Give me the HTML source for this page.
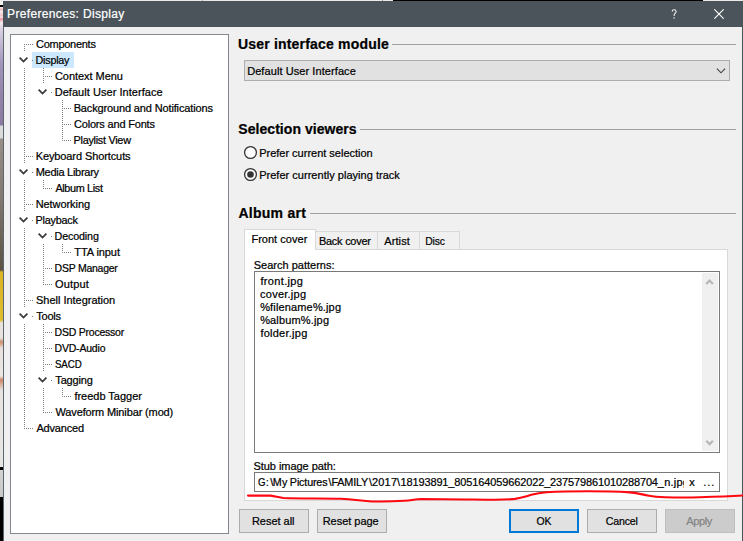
<!DOCTYPE html>
<html><head><meta charset="utf-8"><title>Preferences: Display</title>
<style>
html,body{margin:0;padding:0;}
body{width:743px;height:541px;overflow:hidden;background:#f0f0f0;position:relative;font-family:"Liberation Sans",sans-serif;}
div,span,svg{position:absolute;box-sizing:border-box;}
.t{white-space:pre;-webkit-text-stroke:0.22px currentColor;}
.btn{background:#e1e1e1;border:1px solid #adadad;}
.hr{height:1px;background:#a0a0a0;}
.dv{width:1px;background-image:linear-gradient(#808080 50%,transparent 50%);background-size:1px 2px;}
.dh{height:1px;background-image:linear-gradient(90deg,#808080 50%,transparent 50%);background-size:2px 1px;}
</style></head><body>
<div style="left:0;top:0;width:3px;height:541px;background:linear-gradient(#f0f0f0 0px,#f0f0f0 5px,#000 5px,#000 7px,#f6eef0 7px,#eeb4b8 10px,#f6eef0 11px,#f0c0c4 16px,#f6eef0 17px,#e89098 19px,#f0c8cc 21px,#f4ecee 23px,#e4dce6 26px,#d8cfe0 30px,#a294ba 64px,#9282aa 100px,#8a7aa2 125px,#dcdcdc 126px,#d8d8d8 138px,#989088 139px,#807870 200px,#5a5044 270px,#dcb424 272px,#e0bc30 320px,#e8e4e0 323px,#e8e0dc 338px,#cc8c6c 342px,#e8e0dc 348px,#ece8e4 376px,#cc8464 380px,#e8e2de 390px,#e6e6e4 455px,#e4e4e4 467px,#000 467px,#000 470px,#d2d2d2 470px,#c8c8c8 497px,#000 497px,#000 541px);"></div>
<div style="left:0px;top:0;width:743px;height:1px;background:#e9e9e9;"></div>
<div style="left:393px;top:0;width:310px;height:1px;background:#000;"></div>
<div style="left:382px;top:0;width:1px;height:1px;background:#9a9a9a;"></div>
<div style="left:202px;top:0;width:1px;height:1px;background:#b0b0b0;"></div>
<div style="left:3px;top:1px;width:740px;height:26px;background:#4a545a;"></div>
<div style="left:3px;top:27px;width:1px;height:514px;background:#5c666e;"></div>
<div style="left:742px;top:27px;width:1px;height:514px;background:#4a545a;"></div>
<div style="left:10px;top:34px;width:219px;height:500px;background:#fff;border:1px solid #828790;"></div>
<div style="left:32px;top:52px;width:42px;height:16px;background:#cce8ff;"></div>
<div class="hr" style="left:392px;top:44px;width:344px;"></div>
<div class="hr" style="left:360px;top:129px;width:376px;"></div>
<div class="hr" style="left:310px;top:213px;width:426px;"></div>
<div class="btn" style="left:244px;top:60px;width:486px;height:21px;"></div>
<div style="left:244px;top:249px;width:484px;height:252px;background:#fff;border:1px solid #d9d9d9;"></div>
<div style="left:315px;top:231px;width:63px;height:19px;background:#f0f0f0;border:1px solid #d9d9d9;"></div>
<div style="left:377px;top:231px;width:43px;height:19px;background:#f0f0f0;border:1px solid #d9d9d9;"></div>
<div style="left:419px;top:231px;width:41px;height:19px;background:#f0f0f0;border:1px solid #d9d9d9;"></div>
<div style="left:244px;top:229px;width:72px;height:21px;background:#fff;border:1px solid #d9d9d9;border-bottom:none;"></div>
<div style="left:254px;top:271px;width:466px;height:182px;background:#fff;border:1px solid #7a7a7a;"></div>
<div style="left:702px;top:273px;width:16px;height:178px;background:#f0f0f0;"></div>
<div style="left:254px;top:472px;width:466px;height:20px;background:#fff;border:1px solid #7a7a7a;"></div>
<div class="btn" style="left:239px;top:509px;width:70px;height:24px;"></div>
<div class="btn" style="left:317px;top:509px;width:70px;height:24px;"></div>
<div class="btn" style="left:509px;top:509px;width:70px;height:24px;border:2px solid #0078d7;"></div>
<div class="btn" style="left:587px;top:509px;width:70px;height:24px;"></div>
<div class="btn" style="left:665px;top:509px;width:70px;height:24px;background:#cccccc;border-color:#bfbfbf;"></div>
<svg style="left:714px;top:9px" width="10" height="10" viewBox="0 0 10 10"><path d="M0.3 0.3L9.7 9.7M9.7 0.3L0.3 9.7" stroke="#fff" stroke-width="1.1" fill="none"/></svg>
<svg style="left:671px;top:9px" width="7" height="11" viewBox="0 0 7 11"><path d="M1.1 2.6C1.2 1.3 2 0.7 3.1 0.7C4.3 0.7 5.1 1.4 5.1 2.5C5.1 3.7 4.2 4.2 3.6 4.9C3.2 5.4 3.1 5.9 3.1 6.9" stroke="#f4f4f4" stroke-width="1.05" fill="none"/><rect x="2.5" y="8.3" width="1.2" height="1.3" fill="#f4f4f4"/></svg>
<span class="t" style="left:35.00px;top:36.19px;font-size:11px;line-height:16px;font-weight:400;color:#000;letter-spacing:-0.266px;transform:translateX(0.98px) scaleX(0.9987);transform-origin:0 0;">Components</span>
<div class="dh" style="left:24px;top:44px;width:9px;"></div>
<span class="t" style="left:35.00px;top:52.19px;font-size:11px;line-height:16px;font-weight:400;color:#000;letter-spacing:-0.225px;transform:translateX(0.56px) scaleX(0.9771);transform-origin:0 0;">Display</span>
<svg style="left:18px;top:56px" width="11" height="8" viewBox="0 0 11 8"><path d="M1.6 1.7L5.5 5.6L9.4 1.7" stroke="#3c3c3c" stroke-width="1.8" fill="none"/></svg>
<div style="left:32px;top:60px;width:1px;height:1px;background:#808080;"></div>
<span class="t" style="left:54.97px;top:68.19px;font-size:11px;line-height:16px;font-weight:400;color:#000;letter-spacing:-0.043px;">Context Menu</span>
<div class="dh" style="left:43px;top:76px;width:9px;"></div>
<span class="t" style="left:54.65px;top:84.19px;font-size:11px;line-height:16px;font-weight:400;color:#000;letter-spacing:0.047px;">Default User Interface</span>
<svg style="left:37px;top:88px" width="11" height="8" viewBox="0 0 11 8"><path d="M1.6 1.7L5.5 5.6L9.4 1.7" stroke="#3c3c3c" stroke-width="1.8" fill="none"/></svg>
<div style="left:51px;top:92px;width:1px;height:1px;background:#808080;"></div>
<span class="t" style="left:73.65px;top:100.19px;font-size:11px;line-height:16px;font-weight:400;color:#000;letter-spacing:-0.141px;">Background and Notifications</span>
<div class="dh" style="left:62px;top:108px;width:9px;"></div>
<span class="t" style="left:73.97px;top:116.19px;font-size:11px;line-height:16px;font-weight:400;color:#000;letter-spacing:-0.184px;">Colors and Fonts</span>
<div class="dh" style="left:62px;top:124px;width:9px;"></div>
<span class="t" style="left:73.00px;top:132.19px;font-size:11px;line-height:16px;font-weight:400;color:#000;letter-spacing:-0.274px;transform:translateX(0.56px) scaleX(0.9853);transform-origin:0 0;">Playlist View</span>
<div class="dh" style="left:62px;top:140px;width:9px;"></div>
<span class="t" style="left:35.65px;top:148.19px;font-size:11px;line-height:16px;font-weight:400;color:#000;letter-spacing:-0.097px;">Keyboard Shortcuts</span>
<div class="dh" style="left:24px;top:156px;width:9px;"></div>
<span class="t" style="left:35.65px;top:164.19px;font-size:11px;line-height:16px;font-weight:400;color:#000;letter-spacing:-0.270px;">Media Library</span>
<svg style="left:18px;top:168px" width="11" height="8" viewBox="0 0 11 8"><path d="M1.6 1.7L5.5 5.6L9.4 1.7" stroke="#3c3c3c" stroke-width="1.8" fill="none"/></svg>
<div style="left:32px;top:172px;width:1px;height:1px;background:#808080;"></div>
<span class="t" style="left:55.00px;top:180.19px;font-size:11px;line-height:16px;font-weight:400;color:#000;letter-spacing:-0.346px;transform:translateX(0.38px) scaleX(0.9864);transform-origin:0 0;">Album List</span>
<div class="dh" style="left:43px;top:188px;width:9px;"></div>
<span class="t" style="left:35.65px;top:196.19px;font-size:11px;line-height:16px;font-weight:400;color:#000;letter-spacing:-0.063px;">Networking</span>
<div class="dh" style="left:24px;top:204px;width:9px;"></div>
<span class="t" style="left:35.00px;top:212.19px;font-size:11px;line-height:16px;font-weight:400;color:#000;letter-spacing:-0.235px;transform:translateX(0.56px) scaleX(0.9825);transform-origin:0 0;">Playback</span>
<svg style="left:18px;top:216px" width="11" height="8" viewBox="0 0 11 8"><path d="M1.6 1.7L5.5 5.6L9.4 1.7" stroke="#3c3c3c" stroke-width="1.8" fill="none"/></svg>
<div style="left:32px;top:220px;width:1px;height:1px;background:#808080;"></div>
<span class="t" style="left:54.00px;top:228.19px;font-size:11px;line-height:16px;font-weight:400;color:#000;letter-spacing:-0.146px;transform:translateX(0.56px) scaleX(0.9754);transform-origin:0 0;">Decoding</span>
<svg style="left:37px;top:232px" width="11" height="8" viewBox="0 0 11 8"><path d="M1.6 1.7L5.5 5.6L9.4 1.7" stroke="#3c3c3c" stroke-width="1.8" fill="none"/></svg>
<div style="left:51px;top:236px;width:1px;height:1px;background:#808080;"></div>
<span class="t" style="left:74.31px;top:244.19px;font-size:11px;line-height:16px;font-weight:400;color:#000;letter-spacing:-0.078px;">TTA input</span>
<div class="dh" style="left:62px;top:252px;width:9px;"></div>
<span class="t" style="left:54.00px;top:260.19px;font-size:11px;line-height:16px;font-weight:400;color:#000;letter-spacing:-0.248px;transform:translateX(0.55px) scaleX(0.9529);transform-origin:0 0;">DSP Manager</span>
<div class="dh" style="left:43px;top:268px;width:9px;"></div>
<span class="t" style="left:55.06px;top:276.19px;font-size:11px;line-height:16px;font-weight:400;color:#000;letter-spacing:0.168px;">Output</span>
<div class="dh" style="left:43px;top:284px;width:9px;"></div>
<span class="t" style="left:35.97px;top:292.19px;font-size:11px;line-height:16px;font-weight:400;color:#000;letter-spacing:-0.015px;">Shell Integration</span>
<div class="dh" style="left:24px;top:300px;width:9px;"></div>
<span class="t" style="left:36.31px;top:308.19px;font-size:11px;line-height:16px;font-weight:400;color:#000;letter-spacing:-0.263px;">Tools</span>
<svg style="left:18px;top:312px" width="11" height="8" viewBox="0 0 11 8"><path d="M1.6 1.7L5.5 5.6L9.4 1.7" stroke="#3c3c3c" stroke-width="1.8" fill="none"/></svg>
<div style="left:32px;top:316px;width:1px;height:1px;background:#808080;"></div>
<span class="t" style="left:54.00px;top:324.19px;font-size:11px;line-height:16px;font-weight:400;color:#000;letter-spacing:-0.244px;transform:translateX(0.55px) scaleX(0.9555);transform-origin:0 0;">DSD Processor</span>
<div class="dh" style="left:43px;top:332px;width:9px;"></div>
<span class="t" style="left:54.00px;top:340.19px;font-size:11px;line-height:16px;font-weight:400;color:#000;letter-spacing:-0.187px;transform:translateX(0.55px) scaleX(0.9516);transform-origin:0 0;">DVD-Audio</span>
<div class="dh" style="left:43px;top:348px;width:9px;"></div>
<span class="t" style="left:54.00px;top:356.19px;font-size:11px;line-height:16px;font-weight:400;color:#000;letter-spacing:-0.131px;transform:translateX(0.98px) scaleX(0.8855);transform-origin:0 0;">SACD</span>
<div class="dh" style="left:43px;top:364px;width:9px;"></div>
<span class="t" style="left:55.31px;top:372.19px;font-size:11px;line-height:16px;font-weight:400;color:#000;letter-spacing:-0.146px;">Tagging</span>
<svg style="left:37px;top:376px" width="11" height="8" viewBox="0 0 11 8"><path d="M1.6 1.7L5.5 5.6L9.4 1.7" stroke="#3c3c3c" stroke-width="1.8" fill="none"/></svg>
<div style="left:51px;top:380px;width:1px;height:1px;background:#808080;"></div>
<span class="t" style="left:74.40px;top:388.19px;font-size:11px;line-height:16px;font-weight:400;color:#000;letter-spacing:-0.010px;">freedb Tagger</span>
<div class="dh" style="left:62px;top:396px;width:9px;"></div>
<span class="t" style="left:55.47px;top:404.19px;font-size:11px;line-height:16px;font-weight:400;color:#000;letter-spacing:-0.134px;">Waveform Minibar (mod)</span>
<div class="dh" style="left:43px;top:412px;width:9px;"></div>
<span class="t" style="left:36.47px;top:420.19px;font-size:11px;line-height:16px;font-weight:400;color:#000;letter-spacing:-0.198px;">Advanced</span>
<div class="dh" style="left:24px;top:428px;width:9px;"></div>
<div class="dv" style="left:24px;top:44px;height:7px;"></div>
<div class="dv" style="left:43px;top:68px;height:9px;"></div>
<div class="dv" style="left:43px;top:76px;height:7px;"></div>
<div class="dv" style="left:62px;top:100px;height:9px;"></div>
<div class="dv" style="left:62px;top:108px;height:17px;"></div>
<div class="dv" style="left:62px;top:124px;height:17px;"></div>
<div class="dv" style="left:24px;top:68px;height:89px;"></div>
<div class="dv" style="left:24px;top:156px;height:7px;"></div>
<div class="dv" style="left:43px;top:180px;height:9px;"></div>
<div class="dv" style="left:24px;top:180px;height:25px;"></div>
<div class="dv" style="left:24px;top:204px;height:7px;"></div>
<div class="dv" style="left:62px;top:244px;height:9px;"></div>
<div class="dv" style="left:43px;top:244px;height:25px;"></div>
<div class="dv" style="left:43px;top:268px;height:17px;"></div>
<div class="dv" style="left:24px;top:228px;height:73px;"></div>
<div class="dv" style="left:24px;top:300px;height:7px;"></div>
<div class="dv" style="left:43px;top:324px;height:9px;"></div>
<div class="dv" style="left:43px;top:332px;height:17px;"></div>
<div class="dv" style="left:43px;top:348px;height:17px;"></div>
<div class="dv" style="left:43px;top:364px;height:7px;"></div>
<div class="dv" style="left:62px;top:388px;height:9px;"></div>
<div class="dv" style="left:43px;top:388px;height:25px;"></div>
<div class="dv" style="left:24px;top:324px;height:105px;"></div>
<svg style="left:716px;top:67px" width="10" height="8" viewBox="0 0 10 8"><path d="M0.9 1.6L5 5.8L9.1 1.6" stroke="#444" stroke-width="1.15" fill="none"/></svg>
<svg style="left:243px;top:145px" width="16" height="38" viewBox="0 0 16 38"><circle cx="7.5" cy="7.5" r="5.9" fill="#fff" stroke="#333" stroke-width="1.3"/><circle cx="7.5" cy="29.5" r="5.9" fill="#fff" stroke="#333" stroke-width="1.3"/><circle cx="7.5" cy="29.5" r="3.3" fill="#333"/></svg>
<svg style="left:702px;top:273px" width="16" height="178" viewBox="0 0 16 178"><path d="M4.3 10.9L7.6 7.5L10.9 10.9M4.3 167.8L7.6 171.2L10.9 167.8" stroke="#b6b6b6" stroke-width="2.2" fill="none"/></svg>
<span class="t" style="left:7.06px;top:5.74px;font-size:12px;line-height:17px;font-weight:400;color:#ffffff;letter-spacing:0.344px;">Preferences: Display</span>
<span class="t" style="left:237.97px;top:34.85px;font-size:14px;line-height:19px;font-weight:700;color:#000;letter-spacing:0.188px;">User interface module</span>
<span class="t" style="left:247.15px;top:63.19px;font-size:11px;line-height:16px;font-weight:400;color:#000;letter-spacing:0.080px;">Default User Interface</span>
<span class="t" style="left:238.31px;top:119.85px;font-size:14px;line-height:19px;font-weight:700;color:#000;letter-spacing:0.052px;">Selection viewers</span>
<span class="t" style="left:259.15px;top:145.19px;font-size:11px;line-height:16px;font-weight:400;color:#000;letter-spacing:-0.005px;">Prefer current selection</span>
<span class="t" style="left:259.15px;top:167.19px;font-size:11px;line-height:16px;font-weight:400;color:#000;letter-spacing:0.024px;">Prefer currently playing track</span>
<span class="t" style="left:238.40px;top:203.85px;font-size:14px;line-height:19px;font-weight:700;color:#000;letter-spacing:0.281px;">Album art</span>
<span class="t" style="left:251.40px;top:231.19px;font-size:11px;line-height:16px;font-weight:400;color:#000;letter-spacing:0.027px;">Front cover</span>
<span class="t" style="left:318.00px;top:233.19px;font-size:11px;line-height:16px;font-weight:400;color:#000;letter-spacing:-0.239px;transform:translateX(0.90px) scaleX(0.9967);transform-origin:0 0;">Back cover</span>
<span class="t" style="left:384.22px;top:233.19px;font-size:11px;line-height:16px;font-weight:400;color:#000;letter-spacing:0.105px;">Artist</span>
<span class="t" style="left:425.00px;top:233.19px;font-size:11px;line-height:16px;font-weight:400;color:#000;letter-spacing:-0.087px;transform:translateX(0.15px) scaleX(0.9410);transform-origin:0 0;">Disc</span>
<span class="t" style="left:253.72px;top:257.29px;font-size:11px;line-height:16px;font-weight:400;color:#000;letter-spacing:0.004px;">Search patterns:</span>
<span class="t" style="left:260.40px;top:273.29px;font-size:11px;line-height:16px;font-weight:400;color:#000;letter-spacing:0.350px;">front.jpg</span>
<span class="t" style="left:260.06px;top:286.29px;font-size:11px;line-height:16px;font-weight:400;color:#000;letter-spacing:0.245px;">cover.jpg</span>
<span class="t" style="left:260.15px;top:299.29px;font-size:11px;line-height:16px;font-weight:400;color:#000;letter-spacing:0.153px;">%filename%.jpg</span>
<span class="t" style="left:260.15px;top:312.29px;font-size:11px;line-height:16px;font-weight:400;color:#000;letter-spacing:0.162px;">%album%.jpg</span>
<span class="t" style="left:260.40px;top:325.29px;font-size:11px;line-height:16px;font-weight:400;color:#000;letter-spacing:0.248px;">folder.jpg</span>
<span class="t" style="left:253.47px;top:458.19px;font-size:11px;line-height:16px;font-weight:400;color:#000;letter-spacing:-0.047px;">Stub image path:</span>
<span class="t" style="left:251.90px;top:513.29px;font-size:11px;line-height:16px;font-weight:400;color:#000;letter-spacing:-0.022px;">Reset all</span>
<span class="t" style="left:322.65px;top:513.29px;font-size:11px;line-height:16px;font-weight:400;color:#000;letter-spacing:-0.021px;">Reset page</span>
<span class="t" style="left:536.00px;top:513.29px;font-size:11px;line-height:16px;font-weight:400;color:#000;letter-spacing:-0.089px;transform:translateX(0.41px) scaleX(0.9473);transform-origin:0 0;">OK</span>
<span class="t" style="left:605.00px;top:513.29px;font-size:11px;line-height:16px;font-weight:400;color:#000;letter-spacing:-0.155px;transform:translateX(0.65px) scaleX(0.9630);transform-origin:0 0;">Cancel</span>
<span class="t" style="left:686.22px;top:513.29px;font-size:11px;line-height:16px;font-weight:400;color:#838383;letter-spacing:-0.356px;">Apply</span>
<span class="t" style="left:689.15px;top:474.29px;font-size:11px;line-height:16px;font-weight:400;color:#000;letter-spacing:-0.290px;">x</span>
<span class="t" style="left:703.24px;top:474.29px;font-size:11px;line-height:16px;font-weight:400;color:#000;letter-spacing:0.916px;">...</span>
<div style="left:0;top:0;width:684px;height:541px;overflow:hidden;"><span class="t" style="left:257.00px;top:474.29px;font-size:11px;line-height:16px;font-weight:400;color:#000;letter-spacing:0.655px;transform:translateX(0.98px) scaleX(0.8798);transform-origin:0 0;">G:</span><span class="t" style="left:270.29px;top:474.29px;font-size:11px;line-height:16px;font-weight:400;color:#000;letter-spacing:0.277px;">\</span><span class="t" style="left:272.00px;top:474.29px;font-size:11px;line-height:16px;font-weight:400;color:#000;letter-spacing:0.152px;transform:translateX(0.87px) scaleX(0.9736);transform-origin:0 0;">My</span><span class="t" style="left:289.00px;top:474.29px;font-size:11px;line-height:16px;font-weight:400;color:#000;letter-spacing:-0.180px;transform:translateX(0.87px) scaleX(0.9799);transform-origin:0 0;">Pictures</span><span class="t" style="left:328.56px;top:474.29px;font-size:11px;line-height:16px;font-weight:400;color:#000;letter-spacing:5.567px;">\</span><span class="t" style="left:331.00px;top:474.29px;font-size:11px;line-height:16px;font-weight:400;color:#000;letter-spacing:-0.188px;transform:translateX(0.46px) scaleX(0.9860);transform-origin:0 0;">FAMILY</span><span class="t" style="left:368.97px;top:474.29px;font-size:11px;line-height:16px;font-weight:400;color:#000;letter-spacing:2.848px;">\</span><span class="t" style="left:371.89px;top:474.29px;font-size:11px;line-height:16px;font-weight:400;color:#000;letter-spacing:0.224px;">2017</span><span class="t" style="left:397.05px;top:474.29px;font-size:11px;line-height:16px;font-weight:400;color:#000;letter-spacing:11.157px;">\</span><span class="t" style="left:400.48px;top:474.29px;font-size:11px;line-height:16px;font-weight:400;color:#000;letter-spacing:-0.132px;">18193891_805164059662022_237579861010288704_</span><span class="t" style="left:664.24px;top:474.29px;font-size:11px;line-height:16px;font-weight:400;color:#000;letter-spacing:0.216px;">n.jpg</span></div>
<svg style="left:0;top:0" width="743" height="541" viewBox="0 0 743 541"><path d="M248 495.6 L270.5 495.6 C276 496.5 279.5 497.6 283.5 498 C300 498.8 320 498.3 341 498.8 C355 499.5 365 501.3 376 501.5 C388 501.7 396 501.3 404 500.8 C412 500.2 416 499.2 421 499 C445 499 470 499.5 495 499.8 C502 499.7 510 499.5 515 498.9 C522 497.8 527 496 532.5 494.6 C537 493.5 542 492.8 546.5 492.3 C558 491.6 572 491.3 588 491.3 C602 491.3 617 491.6 630 492.4 C637 493 642 494.4 647.5 495.5 C653 496.5 659 497.1 665 497.3 C677 497.6 689 497.6 700 497.3 C715 496.8 730 496.2 743 495.5" stroke="#ff0810" stroke-width="2.1" fill="none" stroke-linecap="round"/></svg>
</body></html>
